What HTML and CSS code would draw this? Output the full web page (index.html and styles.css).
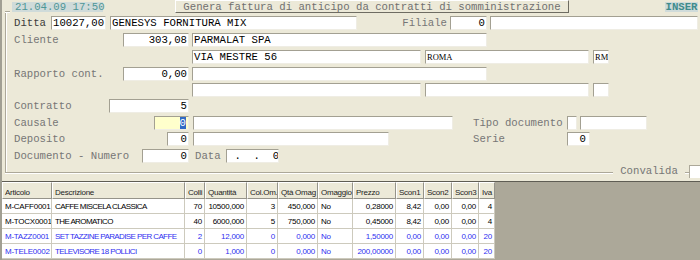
FILE: index.html
```html
<!DOCTYPE html>
<html>
<head>
<meta charset="utf-8">
<link rel="stylesheet" href="styles.css">
</head>
<body>
<div class="win">
  <div class="top">
    <span class="clock">21.04.09 17:50</span>
    <span class="btn">Genera fattura di anticipo da contratti di somministrazione</span>
    <span class="mode">INSER</span>
  </div>

  <div class="group">
    <div class="row">
      <span class="lbl dark w37">Ditta</span>
      <span class="box num w55 pr3">10027,00</span>
      <span class="box w247 ml4">GENESYS FORNITURA MIX</span>
      <span class="lbl w90 right">Filiale</span>
      <span class="box num w37 ml3">0</span>
      <span class="box w208 ml3"></span>
    </div>
    <div class="row">
      <div class="lead"><span class="lbl">Cliente</span><span class="box num w66">303,08</span></div>
      <span class="box w295 ml3">PARMALAT SPA</span>
    </div>
    <div class="row">
      <div class="lead"></div>
      <span class="box w229 ml3">VIA MESTRE 56</span>
      <span class="box serif w164 ml4">ROMA</span>
      <span class="box serif w16 ml4">RM</span>
    </div>
    <div class="row">
      <div class="lead"><span class="lbl">Rapporto cont.</span><span class="box num w66">0,00</span></div>
      <span class="box w295 ml3"></span>
    </div>
    <div class="row g2">
      <div class="lead"></div>
      <span class="box w229 ml3"></span>
      <span class="box w164 ml4"></span>
      <span class="box w16 ml4"></span>
    </div>
    <div class="row g2">
      <div class="lead"><span class="lbl">Contratto</span><span class="box num w80">5</span></div>
    </div>
    <div class="row">
      <div class="lead"><span class="lbl">Causale</span><span class="box num focus w35"><span class="sel">0</span></span></div>
      <span class="box w260 ml4"></span>
      <span class="lbl w94 ml20">Tipo documento</span>
      <span class="box w10"></span>
      <span class="box w67 ml3"></span>
    </div>
    <div class="row g2">
      <div class="lead"><span class="lbl">Deposito</span><span class="box num w22">0</span></div>
      <span class="box w196 ml4"></span>
      <span class="lbl w94 ml84">Serie</span>
      <span class="box num w23 pr3">0</span>
    </div>
    <div class="row">
      <div class="lead"><span class="lbl">Documento - Numero</span><span class="box num w47">0</span></div>
      <span class="lbl w31 ml6">Data</span>
      <span class="box num w53"> .  .  0</span>
    </div>

    <div class="legend">
      <span class="lbl legend-lbl">Convalida</span>
      <span class="legend-gap"></span>
      <span class="chk"></span>
    </div>
  </div>

  <div class="grid">
    <div class="table">
      <div class="th">Articolo</div>
      <div class="th">Descrizione</div>
      <div class="th">Colli</div>
      <div class="th">Quantità</div>
      <div class="th">Col.Om.</div>
      <div class="th">Qtà Omag</div>
      <div class="th">Omaggio</div>
      <div class="th">Prezzo</div>
      <div class="th">Scon1</div>
      <div class="th">Scon2</div>
      <div class="th">Scon3</div>
      <div class="th">Iva</div>

      <div class="td">M-CAFF0001</div>
      <div class="td desc">CAFFE MISCELA CLASSICA</div>
      <div class="td n">70</div>
      <div class="td n">10500,000</div>
      <div class="td n">3</div>
      <div class="td n">450,000</div>
      <div class="td">No</div>
      <div class="td n">0,28000</div>
      <div class="td n">8,42</div>
      <div class="td n">0,00</div>
      <div class="td n">0,00</div>
      <div class="td n">4</div>

      <div class="td">M-TOCX0001</div>
      <div class="td desc">THE AROMATICO</div>
      <div class="td n">40</div>
      <div class="td n">6000,000</div>
      <div class="td n">5</div>
      <div class="td n">750,000</div>
      <div class="td">No</div>
      <div class="td n">0,45000</div>
      <div class="td n">8,42</div>
      <div class="td n">0,00</div>
      <div class="td n">0,00</div>
      <div class="td n">4</div>

      <div class="td blue">M-TAZZ0001</div>
      <div class="td blue desc">SET TAZZINE PARADISE PER CAFFE</div>
      <div class="td blue n">2</div>
      <div class="td blue n">12,000</div>
      <div class="td blue n">0</div>
      <div class="td blue n">0,000</div>
      <div class="td blue">No</div>
      <div class="td blue n">1,50000</div>
      <div class="td blue n">0,00</div>
      <div class="td blue n">0,00</div>
      <div class="td blue n">0,00</div>
      <div class="td blue n">20</div>

      <div class="td blue">M-TELE0002</div>
      <div class="td blue desc">TELEVISORE 18 POLLICI</div>
      <div class="td blue n">0</div>
      <div class="td blue n">1,000</div>
      <div class="td blue n">0</div>
      <div class="td blue n">0,000</div>
      <div class="td blue">No</div>
      <div class="td blue n">200,00000</div>
      <div class="td blue n">0,00</div>
      <div class="td blue n">0,00</div>
      <div class="td blue n">0,00</div>
      <div class="td blue n">20</div>
    </div>
  </div>
</div>
</body>
</html>
```

FILE: styles.css
```css
html, body {
  margin: 0;
  padding: 0;
  background: #ECE9D8;
}

.win {
  width: 700px;
  height: 260px;
  box-sizing: border-box;
  overflow: hidden;
  border-left: 2px solid #A19F93;
  display: flex;
  flex-direction: column;
  font-family: "Liberation Mono", "Courier New", monospace;
  font-size: 10.67px;
  color: #000;
}

/* top bar */
.top {
  display: flex;
  align-items: flex-start;
  height: 11px;
  flex: none;
}

.clock {
  margin: 2px 0 0 10px;
  width: 91px;
  height: 10px;
  box-sizing: border-box;
  padding-left: 3px;
  line-height: 10px;
  background: #CFDBDA;
  color: #4F9696;
  white-space: nowrap;
}

.btn {
  margin-left: 72px;
  width: 394px;
  height: 13px;
  box-sizing: border-box;
  border: 1px solid;
  border-color: #FFFFFF #6E6C62 #6E6C62 #FFFFFF;
  padding-top: 1px;
  line-height: 11px;
  text-align: center;
  color: #707070;
  white-space: nowrap;
  background: #ECE9D8;
  position: relative;
  z-index: 1;
}

.mode {
  margin: 2px 0 0 96px;
  width: 33px;
  height: 10px;
  line-height: 10px;
  background: #CFDBDA;
  color: #3F8C8C;
  font-weight: bold;
  text-align: center;
}

/* group frame */
.group {
  position: relative;
  flex: none;
  margin-left: 3px;
  border-left: 1px solid #ACA899;
  border-bottom: 1px solid #ACA899;
  box-shadow: inset 1px 0 0 #FFFFFF, 0 1px 0 #FFFFFF;
  padding: 5px 0 9px 8px;
  display: flex;
  flex-direction: column;
}

.group::before {
  content: "";
  position: absolute;
  left: -1px;
  top: 0;
  width: 5px;
  height: 1px;
  background: #ACA899;
  box-shadow: 0 1px 0 #FFFFFF;
}

.row {
  display: flex;
  height: 14px;
  margin-top: 3px;
}
.row:first-child { margin-top: 0; }
.row.g2 { margin-top: 2px; }

.row > * { flex: none; }

.lead {
  width: 175px;
  display: flex;
  justify-content: space-between;
}

.lbl {
  height: 14px;
  line-height: 14px;
  color: #767676;
  white-space: pre;
  overflow: visible;
}
.lbl.dark { color: #3C3C3C; }
.right { text-align: right; }

.box {
  display: block;
  height: 14px;
  box-sizing: border-box;
  background: #FFFFFF;
  border: 1px solid;
  border-color: #A3A092 #EFEDE4 #EFEDE4 #A3A092;
  padding: 0 1px;
  line-height: 12px;
  white-space: pre;
  overflow: hidden;
  color: #000;
}
.box.num { text-align: right; padding-right: 1px; }
.box.pr3 { padding-right: 3px; }
.box.serif {
  font-family: "Liberation Serif", "Times New Roman", serif;
  font-size: 8.5px;
  padding-left: 1px;
}
.box.focus {
  background: #FFFFCC;
  padding-right: 2px;
}
.sel {
  display: inline-block;
  height: 12px;
  background: #316AC5;
  color: #FFFFFF;
}

/* widths & gaps */
.w10 { width: 10px; }
.w16 { width: 16px; }
.w22 { width: 22px; }
.w23 { width: 23px; }
.w31 { width: 31px; }
.w35 { width: 35px; }
.w37 { width: 37px; }
.w47 { width: 47px; }
.w53 { width: 53px; }
.w55 { width: 55px; }
.w66 { width: 66px; }
.w67 { width: 67px; }
.w80 { width: 80px; }
.w90 { width: 90px; }
.w94 { width: 94px; }
.w164 { width: 164px; }
.w196 { width: 196px; }
.w208 { width: 208px; }
.w229 { width: 229px; }
.w247 { width: 247px; }
.w260 { width: 260px; }
.w295 { width: 295px; }
.ml3 { margin-left: 3px; }
.ml4 { margin-left: 4px; }
.ml6 { margin-left: 6px; }
.ml20 { margin-left: 20px; }
.ml84 { margin-left: 84px; }

/* Convalida caption on the frame's bottom edge */
.legend {
  position: absolute;
  right: 0;
  bottom: -6px;
  height: 13px;
  display: flex;
}
.legend-lbl {
  width: 72px;
  height: 13px;
  line-height: 13px;
  text-align: center;
  background: #ECE9D8;
}
.legend-gap { width: 4px; }
.chk {
  width: 11px;
  height: 13px;
  box-sizing: border-box;
  background: #FFFFFF;
  border-left: 1px solid #ACA899;
  border-top: 1px solid #ACA899;
}

/* grid */
.grid {
  margin-top: 8px;
  flex: 1;
  background: #ACA899;
  border-top: 1px solid #5F5D54;
}

.table {
  display: grid;
  grid-template-columns: 50px 133px 20px 42px 31px 40px 35px 43px 28px 28px 27px 16px;
  grid-template-rows: 17px repeat(4, 15px);
  width: max-content;
  font-family: "Liberation Sans", Arial, sans-serif;
  font-size: 8px;
  letter-spacing: -0.25px;
}

.th {
  box-sizing: border-box;
  background: #ECE9D8;
  border-top: 1px solid #FFFFFF;
  border-left: 1px solid #FFFFFF;
  border-right: 1px solid #95938A;
  border-bottom: 1px solid #95938A;
  padding: 3px 0 0 2px;
  line-height: 13px;
  color: #1E1E1E;
  white-space: nowrap;
  overflow: hidden;
}

.td {
  box-sizing: border-box;
  background: #FFFFFF;
  border-right: 1px solid #CDCABD;
  border-bottom: 1px solid #CDCABD;
  padding: 1px 2px 0 3px;
  line-height: 13px;
  color: #000000;
  white-space: nowrap;
  overflow: hidden;
}
.td.n { text-align: right; }
.td.desc { letter-spacing: -0.6px; }
.td.blue { color: #2F2FF0; }
```
